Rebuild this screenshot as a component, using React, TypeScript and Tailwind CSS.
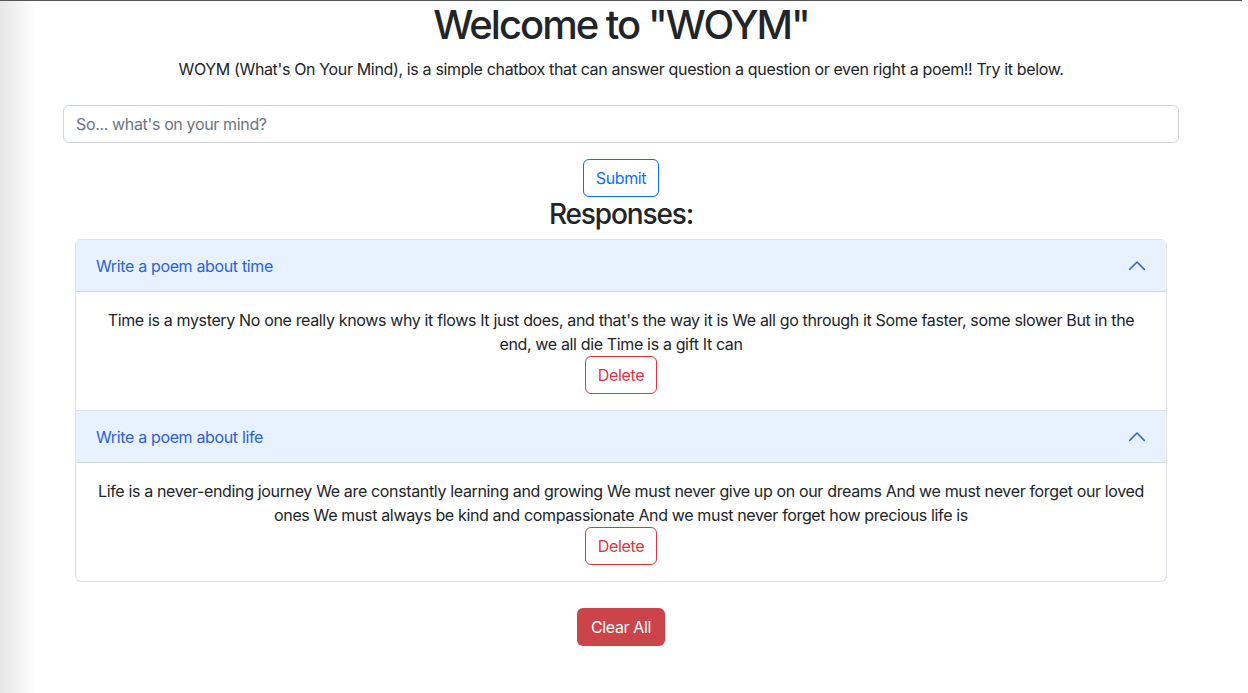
import React from 'react';

const responses = [
  {
    prompt: 'Write a poem about time',
    answer:
      "Time is a mystery No one really knows why it flows It just does, and that's the way it is We all go through it Some faster, some slower But in the end, we all die Time is a gift It can",
  },
  {
    prompt: 'Write a poem about life',
    answer:
      'Life is a never-ending journey We are constantly learning and growing We must never give up on our dreams And we must never forget our loved ones We must always be kind and compassionate And we must never forget how precious life is',
  },
];

const ChevronUp = () => (
  <svg width="18" height="18" viewBox="0 0 16 16" fill="none" stroke="#2b63d9" strokeWidth="1.3" strokeLinecap="round" strokeLinejoin="round">
    <polyline points="1.5,11 8,4.5 14.5,11" />
  </svg>
);

export default function App() {
  return (
    <div className="relative min-h-[693px] w-[1242px] border-t border-[#555] bg-white text-[#212529] tracking-[-0.022em] [font-family:Inter,'Liberation_Sans',sans-serif]">
      {/* window edge shadow */}
      <div className="pointer-events-none absolute left-0 top-0 h-full w-[36px] bg-gradient-to-r from-[#e6e6e6] to-transparent" />

      <div className="mx-auto max-w-[1140px] px-3 text-center">
        <h1 className="mb-2 text-[40px] font-medium leading-[48px] tracking-[-0.05em]">Welcome to "WOYM"</h1>
        <p className="mb-[24px] text-base leading-6">
          WOYM (What's On Your Mind), is a simple chatbox that can answer question a question or even right a poem!! Try it below.
        </p>

        <input
          type="text"
          placeholder="So... what's on your mind?"
          className="block h-[38px] w-full rounded-[6px] border border-[#ced4da] px-3 text-base text-[#212529] placeholder:text-[#6c757d] outline-none"
        />

        <button className="mt-4 h-[38px] rounded-[6px] border border-[#0d6efd] px-3 text-base text-[#0d6efd]">
          Submit
        </button>

        <h3 className="text-[28px] font-medium leading-[34px] tracking-[-0.04em]">Responses:</h3>

        <div className="mx-3 mt-[8px]">
          {responses.map((r, i) => (
            <div
              key={r.prompt}
              className={`border border-[#dee2e6] ${i === 0 ? 'rounded-t-[6px]' : 'rounded-b-[6px] border-t-0'}`}
            >
              <div className={`flex h-[52px] items-center justify-between border-b border-[#d2d9e3] bg-[#e7f1ff] px-5 ${i === 0 ? 'rounded-t-[5px]' : ''}`}>
                <span className="text-base text-[#2b63d9]">{r.prompt}</span>
                <ChevronUp />
              </div>
              <div className="px-5 py-4 text-base leading-6">
                <p>{r.answer}</p>
                <button className="h-[38px] rounded-[6px] border border-[#dc3545] px-3 text-base text-[#dc3545]">
                  Delete
                </button>
              </div>
            </div>
          ))}
        </div>

        <button className="mt-[26px] h-[38px] rounded-[6px] bg-[#cb444a] px-[13.5px] text-base text-white">
          Clear All
        </button>
      </div>
    </div>
  );
}
